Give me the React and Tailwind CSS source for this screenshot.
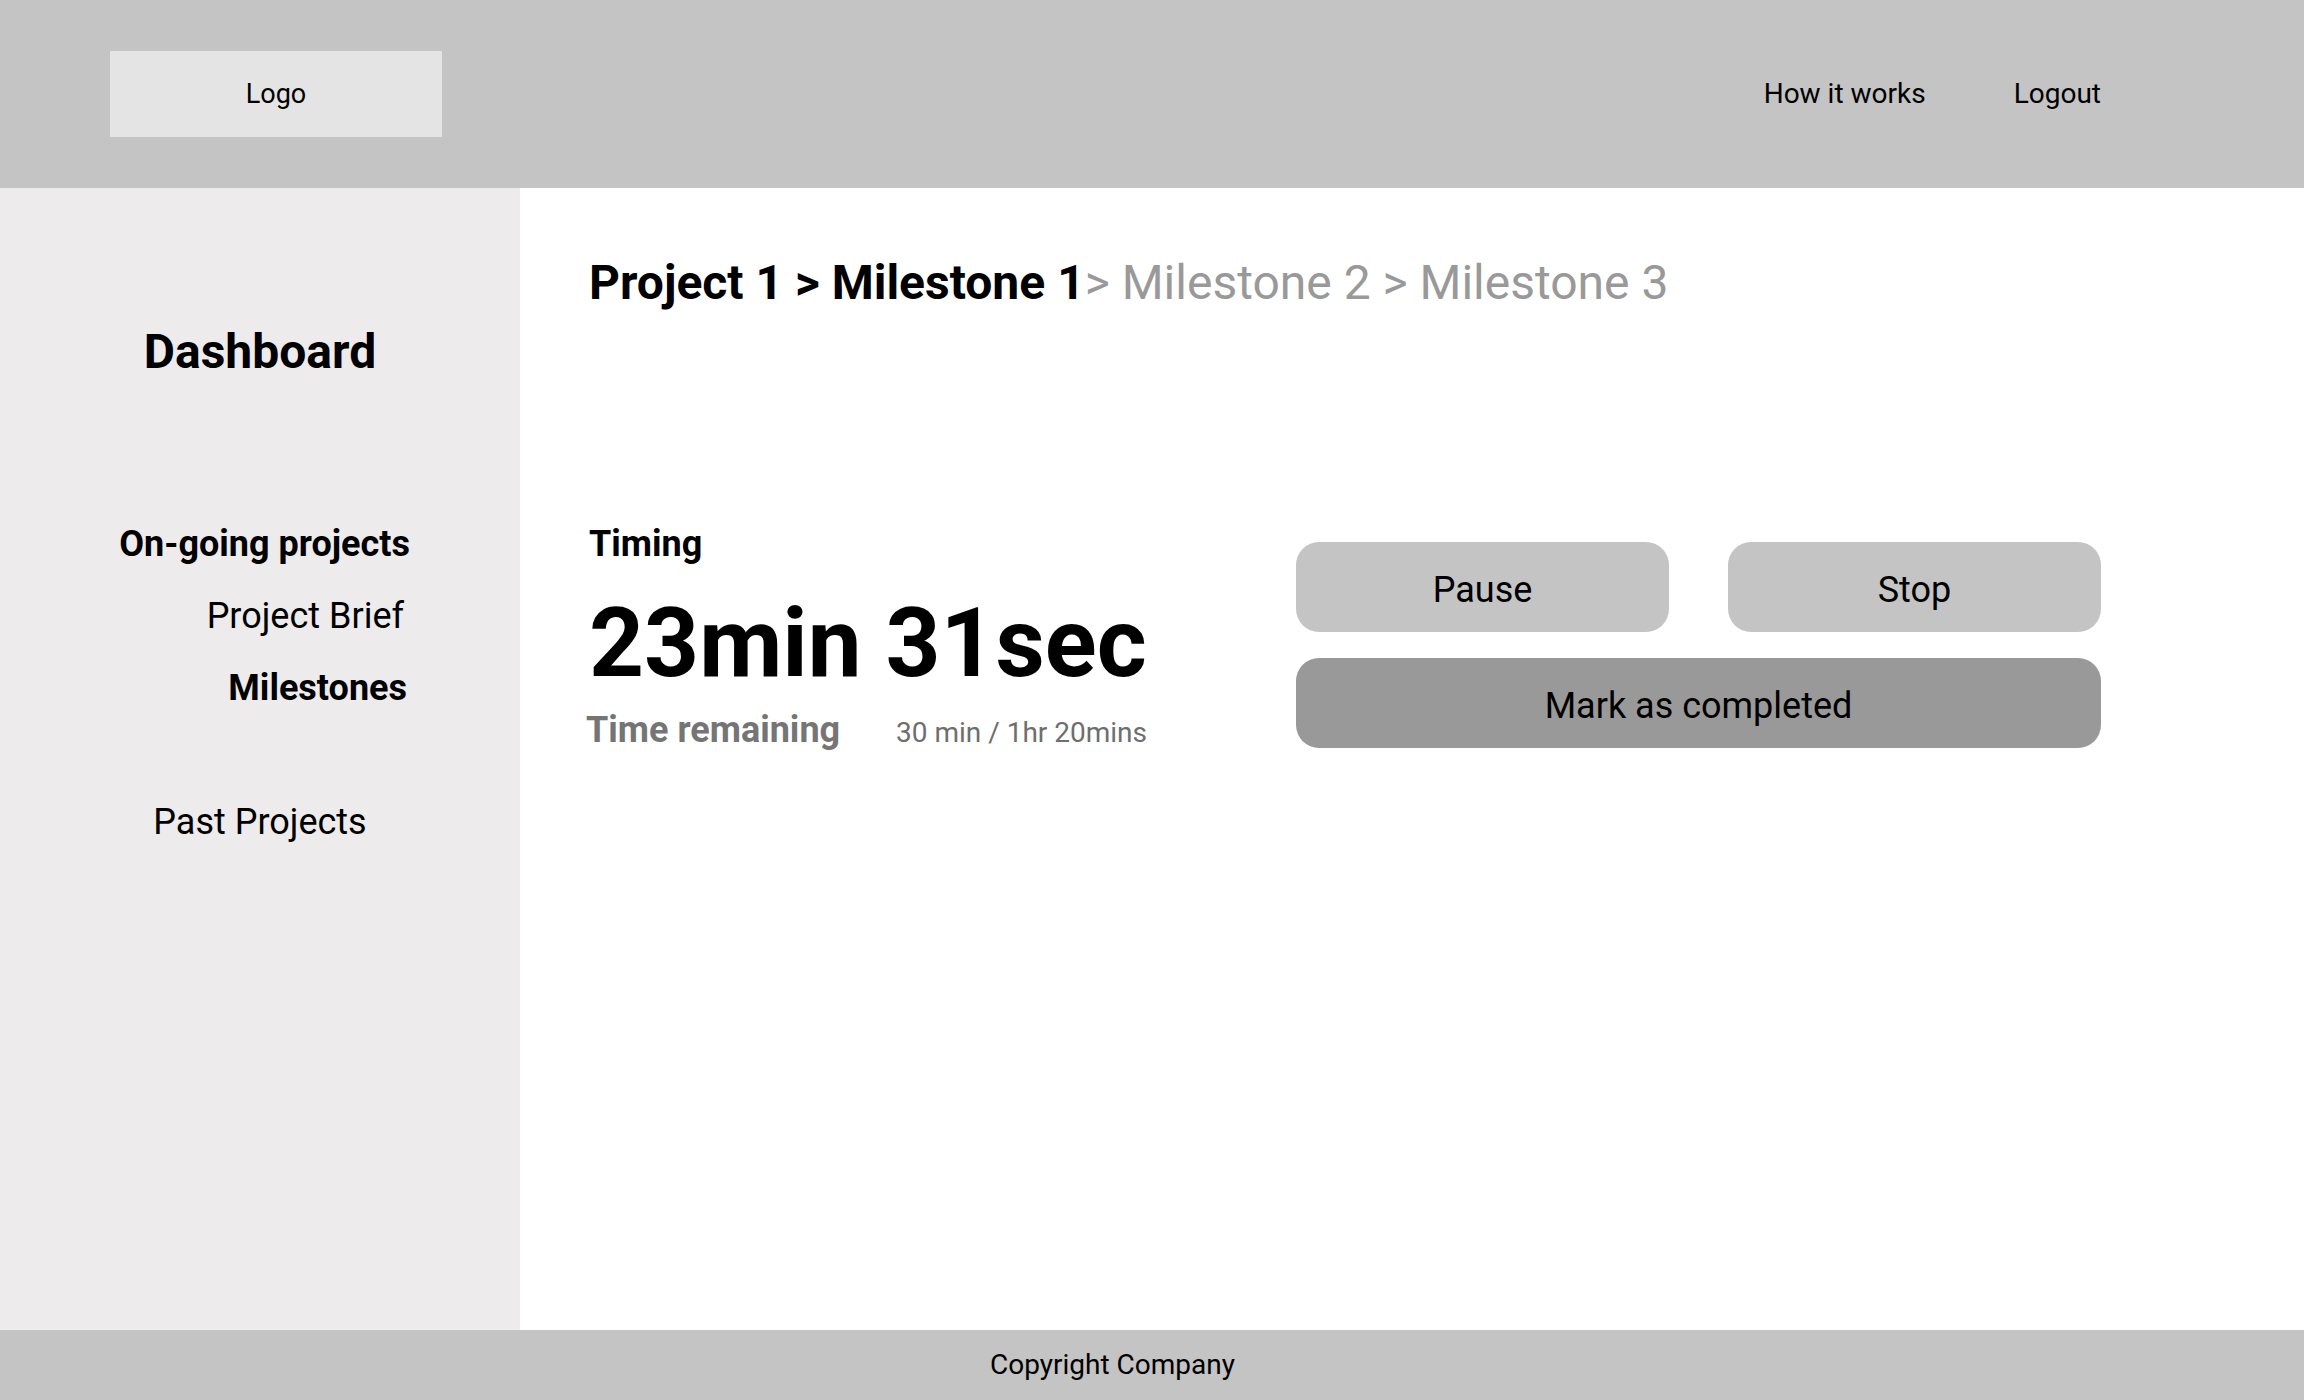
export default function App() {
  return (
    <div className="flex flex-col h-[1400px] w-full font-['Roboto','Liberation_Sans',sans-serif] text-black">
      {/* Header */}
      <header className="h-[188px] flex-shrink-0 bg-[#c4c4c4] flex items-center justify-between pl-[110px] pr-[203px]">
        <div className="w-[332px] h-[86px] bg-[#e4e4e4] flex items-center justify-center text-[27px]">
          Logo
        </div>
        <nav className="flex items-center gap-[88px] text-[28px]">
          <a>How it works</a>
          <a>Logout</a>
        </nav>
      </header>

      <div className="flex-1 flex">
        {/* Sidebar */}
        <aside className="w-[520px] flex-shrink-0 bg-[#edebeb] flex flex-col pt-[140px]">
          <h2 className="text-[48px] leading-none font-bold text-center">Dashboard</h2>
          <div className="mt-[150px] flex flex-col items-end gap-[36px] pr-[110px] text-[36px] leading-none">
            <span className="font-bold">On-going projects</span>
            <span className="pr-[6px]">Project Brief</span>
            <span className="font-bold pr-[3px]">Milestones</span>
          </div>
          <span className="mt-[98px] text-[36px] leading-none text-center">Past Projects</span>
        </aside>

        {/* Main content */}
        <main className="flex-1 bg-white pl-[69px] pt-[71px]">
          <h1 className="text-[48px] leading-none">
            <span className="font-bold">Project 1 &gt; Milestone 1</span>
            <span className="text-[#999999]">&gt; Milestone 2 &gt; Milestone 3</span>
          </h1>

          <div className="mt-[219px] flex items-start gap-[149px]">
            <div className="w-[558px] flex flex-col">
              <span className="text-[36px] leading-none font-bold">Timing</span>
              <span className="mt-[33px] text-[96px] leading-none font-bold">23min 31sec</span>
              <div className="mt-[21px] flex items-baseline justify-between">
                <span className="text-[36px] leading-none font-bold text-[#757575] -ml-[3px]">Time remaining</span>
                <span className="text-[28px] leading-none text-[#6e6e6e]">30 min / 1hr 20mins</span>
              </div>
            </div>

            <div className="mt-[16px] w-[805px] grid grid-cols-2 gap-x-[59px] gap-y-[26px] text-[36px]">
              <button className="h-[90px] pt-[5px] rounded-[23px] bg-[#c4c4c4]">Pause</button>
              <button className="h-[90px] pt-[5px] rounded-[23px] bg-[#c4c4c4]">Stop</button>
              <button className="col-span-2 h-[90px] pt-[5px] rounded-[23px] bg-[#999999]">Mark as completed</button>
            </div>
          </div>
        </main>
      </div>

      {/* Footer */}
      <footer className="h-[70px] flex-shrink-0 bg-[#c4c4c4] flex items-center pl-[990px] text-[28px]">
        Copyright Company
      </footer>
    </div>
  )
}
